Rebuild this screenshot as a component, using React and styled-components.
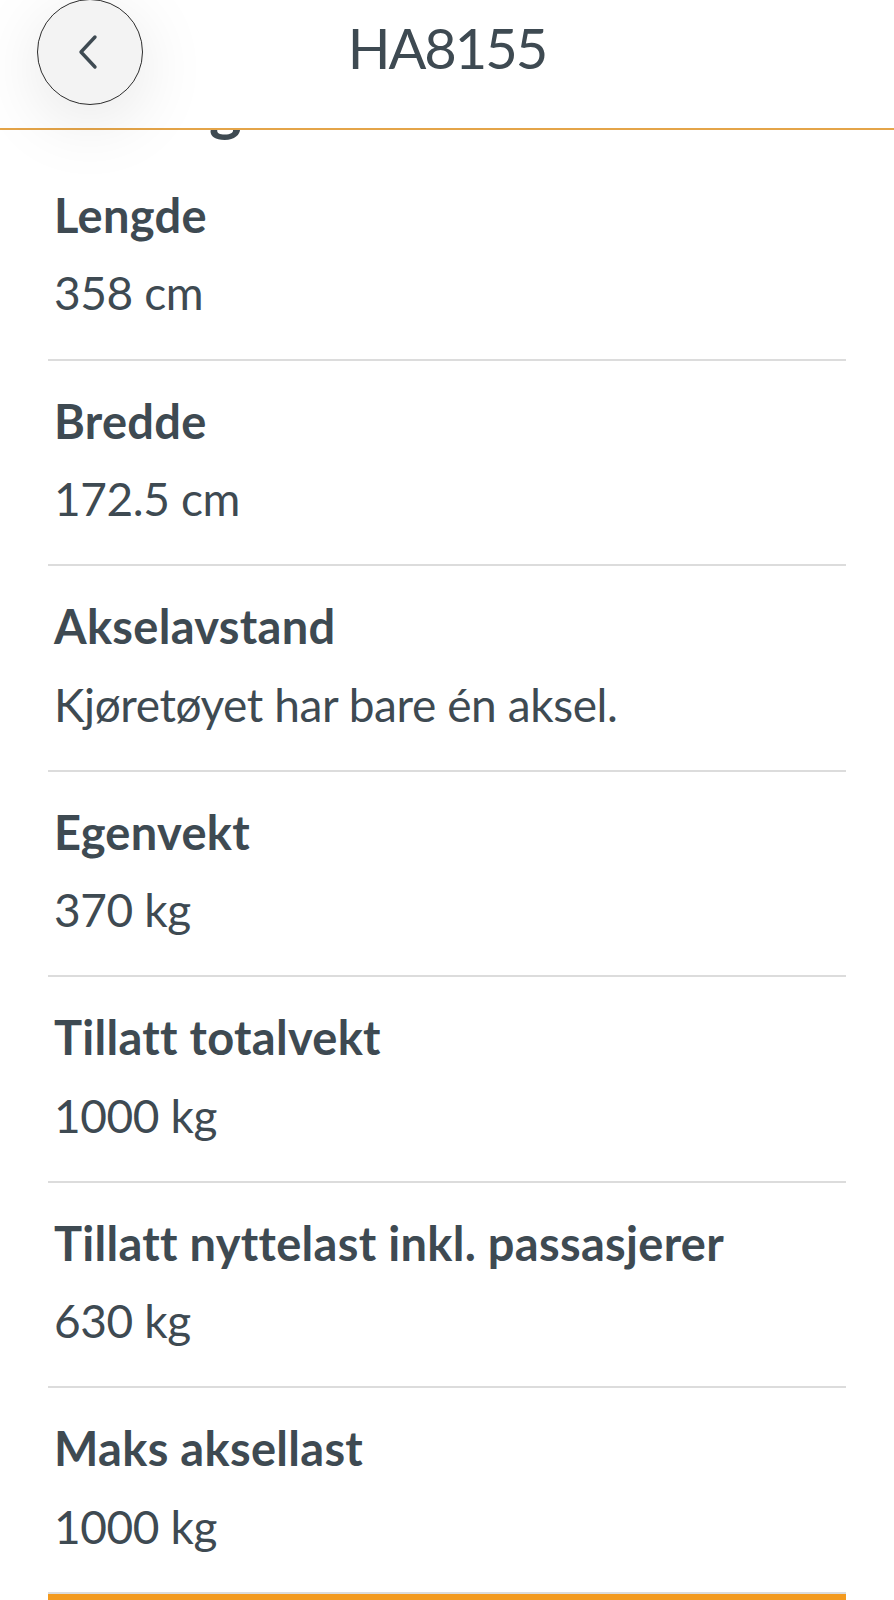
import React from 'react';
import styled, { createGlobalStyle } from 'styled-components';

const GlobalStyle = createGlobalStyle`
  html, body {
    margin: 0;
    padding: 0;
    background: #ffffff;
  }
  body {
    font-family: Lato, "Open Sans", "Liberation Sans", sans-serif;
    color: #3e4a52;
  }
`;

const rows = [
  { label: 'Lengde', value: '358 cm' },
  { label: 'Bredde', value: '172.5 cm' },
  { label: 'Akselavstand', value: 'Kjøretøyet har bare én aksel.' },
  { label: 'Egenvekt', value: '370 kg' },
  { label: 'Tillatt totalvekt', value: '1000 kg' },
  { label: 'Tillatt nyttelast inkl. passasjerer', value: '630 kg' },
  { label: 'Maks aksellast', value: '1000 kg' },
];

function App() {
  return (
    <Page>
      <GlobalStyle />
      <Header>
        <BackButton aria-label="Tilbake">
          <svg width="22" height="36" viewBox="0 0 22 36" fill="none">
            <path
              d="M18 3 L4 18 L18 33"
              stroke="#3e4a52"
              strokeWidth="3.4"
              strokeLinecap="round"
              strokeLinejoin="round"
            />
          </svg>
        </BackButton>
        <Title>HA8155</Title>
      </Header>

      <Content>
        <SectionTitle>Mål og vekt</SectionTitle>
        <List>
          {rows.map((row) => (
            <Row key={row.label}>
              <Label>{row.label}</Label>
              <Value>{row.value}</Value>
            </Row>
          ))}
        </List>
        <BottomBar />
      </Content>
    </Page>
  );
}

export default App;

const Page = styled.div`
  min-height: 1600px;
  background: #ffffff;
`;

const Header = styled.header`
  position: fixed;
  top: 0;
  left: 0;
  right: 0;
  z-index: 10;
  height: 128px;
  background: #ffffff;
  border-bottom: 2px solid #e4a448;
  display: flex;
  align-items: flex-start;
  justify-content: center;
`;

const BackButton = styled.button`
  position: absolute;
  left: 37px;
  top: -1px;
  width: 106px;
  height: 106px;
  border-radius: 50%;
  border: 1.5px solid #2c2c2c;
  background: #f3f3f3;
  box-shadow: 0 16px 70px rgba(0, 0, 0, 0.1);
  display: flex;
  align-items: center;
  justify-content: center;
  padding: 0 4px 0 0;
  cursor: pointer;
`;

const Title = styled.h1`
  margin: 14px 0 0;
  font-size: 56px;
  font-weight: 400;
  line-height: 1.2;
  letter-spacing: -2px;
  color: #3e4a52;
`;

const Content = styled.main`
  padding: 74px 48px 0;
`;

const SectionTitle = styled.h2`
  margin: 0 0 19px 6px;
  font-size: 62px;
  font-weight: 700;
  line-height: 1;
`;

const List = styled.div`
  display: flex;
  flex-direction: column;
`;

const Row = styled.div`
  display: flex;
  flex-direction: column;
  gap: 23px;
  padding: 32px 6px 38px;
  border-bottom: 2px solid #dcdcdc;
`;

const Label = styled.div`
  font-size: 47px;
  font-weight: 700;
  line-height: 1.2;
  letter-spacing: 0.3px;
  margin-bottom: -1px;
  color: #3e4a52;
`;

const Value = styled.div`
  font-size: 46px;
  font-weight: 400;
  line-height: 1.2;
  letter-spacing: -0.4px;
  color: #3e4a52;
`;

const BottomBar = styled.div`
  height: 10px;
  background: #f39a1f;
`;
